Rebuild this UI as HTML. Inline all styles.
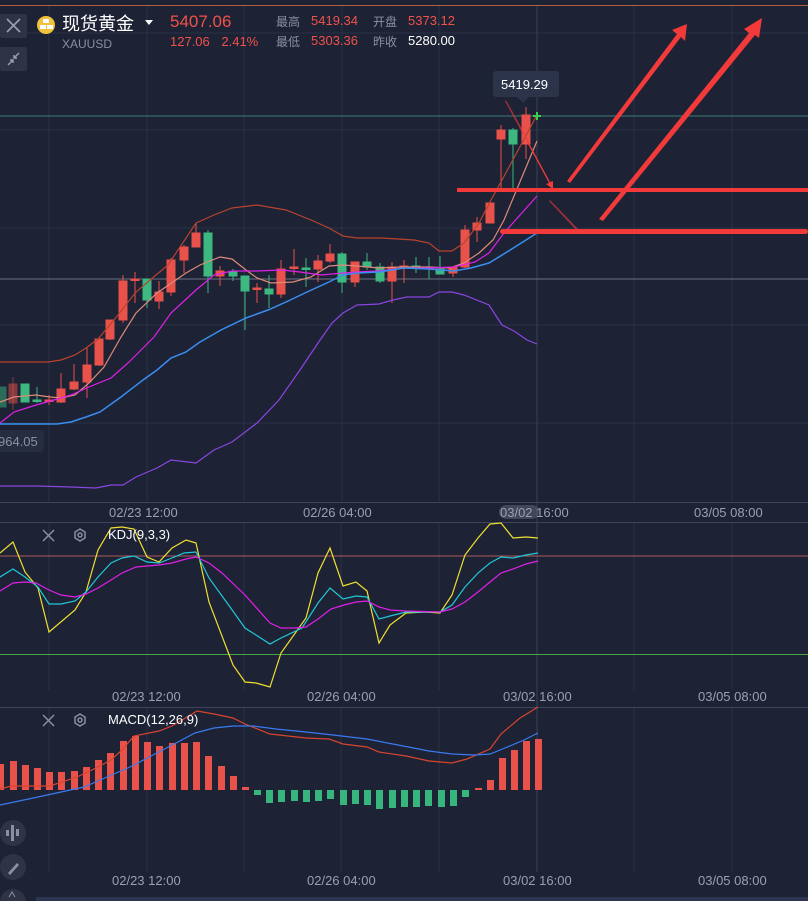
<!DOCTYPE html>
<html><head><meta charset="utf-8"><style>
html,body{margin:0;padding:0;background:#1d2235;width:808px;height:901px;overflow:hidden;font-family:"Liberation Sans","Noto Sans CJK SC",sans-serif}
svg{position:absolute;left:0;top:0}
.t{position:absolute;white-space:nowrap}
</style></head><body>
<svg width="808" height="901" viewBox="0 0 808 901">
<rect width="808" height="901" fill="#1d2235"/>
<line x1="0" y1="5.5" x2="808" y2="5.5" stroke="#b0603a" stroke-width="1"/>
<g stroke="#2c3347" stroke-width="1">
<line x1="49" y1="6" x2="49" y2="502"/><line x1="147" y1="6" x2="147" y2="502"/><line x1="244" y1="6" x2="244" y2="502"/><line x1="342" y1="6" x2="342" y2="502"/><line x1="439" y1="6" x2="439" y2="502"/><line x1="634" y1="6" x2="634" y2="502"/><line x1="732" y1="6" x2="732" y2="502"/>
<line x1="0" y1="33" x2="808" y2="33"/><line x1="0" y1="130" x2="808" y2="130"/><line x1="0" y1="228" x2="808" y2="228"/><line x1="0" y1="325" x2="808" y2="325"/><line x1="0" y1="423" x2="808" y2="423"/>
<line x1="49" y1="522" x2="49" y2="690"/><line x1="147" y1="522" x2="147" y2="690"/><line x1="244" y1="522" x2="244" y2="690"/><line x1="341" y1="522" x2="341" y2="690"/><line x1="439" y1="522" x2="439" y2="690"/><line x1="634" y1="522" x2="634" y2="690"/><line x1="732" y1="522" x2="732" y2="690"/>
<line x1="49" y1="708" x2="49" y2="872"/><line x1="147" y1="708" x2="147" y2="872"/><line x1="244" y1="708" x2="244" y2="872"/><line x1="341" y1="708" x2="341" y2="872"/><line x1="439" y1="708" x2="439" y2="872"/><line x1="634" y1="708" x2="634" y2="872"/><line x1="732" y1="708" x2="732" y2="872"/>
</g>
<line x1="537" y1="6" x2="537" y2="872" stroke="#3a4258"/>
<line x1="0" y1="279" x2="808" y2="279" stroke="#6a7084"/>
<line x1="0" y1="116" x2="808" y2="116" stroke="#3d7a72"/>
<line x1="0" y1="502.5" x2="808" y2="502.5" stroke="#3e455a"/>
<line x1="0" y1="522.5" x2="808" y2="522.5" stroke="#3e455a"/>
<line x1="0" y1="707.5" x2="808" y2="707.5" stroke="#3e455a"/>
<g stroke-width="1">
<g fill="#e8524a" stroke="#e8524a">
<line x1="13" y1="377" x2="13" y2="410" opacity=".5"/><rect x="9" y="384" width="8" height="19" opacity=".5"/>
<line x1="49" y1="395" x2="49" y2="405"/><rect x="45" y="400" width="8" height="1.5"/>
<line x1="61" y1="373" x2="61" y2="403"/><rect x="57" y="389" width="8" height="13"/>
<line x1="74" y1="364" x2="74" y2="390"/><rect x="70" y="382" width="8" height="7"/>
<line x1="87" y1="348" x2="87" y2="398"/><rect x="83" y="365" width="8" height="17"/>
<line x1="99" y1="339" x2="99" y2="366"/><rect x="95" y="339" width="8" height="26"/>
<line x1="110" y1="320" x2="110" y2="340"/><rect x="106" y="320" width="8" height="19"/>
<line x1="123" y1="275" x2="123" y2="323"/><rect x="119" y="281" width="8" height="39"/>
<line x1="135" y1="272" x2="135" y2="303"/><rect x="131" y="279" width="8" height="1.5"/>
<line x1="159" y1="281" x2="159" y2="309"/><rect x="155" y="292" width="8" height="9"/>
<line x1="171" y1="258" x2="171" y2="296"/><rect x="167" y="260" width="8" height="32"/>
<line x1="184" y1="245" x2="184" y2="273"/><rect x="180" y="247" width="8" height="13"/>
<line x1="196" y1="223" x2="196" y2="247"/><rect x="192" y="233" width="8" height="14"/>
<line x1="220" y1="266" x2="220" y2="286"/><rect x="216" y="271" width="8" height="5"/>
<line x1="257" y1="283" x2="257" y2="303"/><rect x="253" y="288" width="8" height="1.5"/>
<line x1="281" y1="260" x2="281" y2="298"/><rect x="277" y="269" width="8" height="25"/>
<line x1="294" y1="249" x2="294" y2="275"/><rect x="290" y="267" width="8" height="1.5"/>
<line x1="318" y1="255" x2="318" y2="282"/><rect x="314" y="261" width="8" height="8"/>
<line x1="330" y1="244" x2="330" y2="263"/><rect x="326" y="254" width="8" height="7"/>
<line x1="355" y1="262" x2="355" y2="287"/><rect x="351" y="262" width="8" height="20"/>
<line x1="392" y1="262" x2="392" y2="303"/><rect x="388" y="267" width="8" height="14"/>
<line x1="404" y1="260" x2="404" y2="283"/><rect x="400" y="266" width="8" height="1.5"/>
<line x1="453" y1="267" x2="453" y2="277"/><rect x="449" y="267" width="8" height="6"/>
<line x1="465" y1="225" x2="465" y2="268"/><rect x="461" y="230" width="8" height="37"/>
<line x1="477" y1="217" x2="477" y2="242"/><rect x="473" y="223" width="8" height="7"/>
<line x1="490" y1="201" x2="490" y2="223"/><rect x="486" y="203" width="8" height="20"/>
<line x1="501" y1="125" x2="501" y2="190"/><rect x="497" y="130" width="8" height="9"/>
<line x1="526" y1="107" x2="526" y2="159"/><rect x="522" y="115" width="8" height="29"/>
</g>
<g fill="#3cb880" stroke="#3cb880">
<rect x="-2" y="387" width="8" height="20" opacity=".5"/>
<rect x="21" y="384" width="8" height="18"/>
<line x1="37" y1="387" x2="37" y2="403"/><rect x="33" y="400" width="8" height="1.5"/>
<line x1="147" y1="279" x2="147" y2="308"/><rect x="143" y="279" width="8" height="21"/>
<line x1="208" y1="230" x2="208" y2="293"/><rect x="204" y="233" width="8" height="43"/>
<line x1="233" y1="269" x2="233" y2="281"/><rect x="229" y="272" width="8" height="4"/>
<line x1="245" y1="276" x2="245" y2="330"/><rect x="241" y="276" width="8" height="15"/>
<line x1="269" y1="275" x2="269" y2="308"/><rect x="265" y="289" width="8" height="5"/>
<line x1="306" y1="258" x2="306" y2="287"/><rect x="302" y="268" width="8" height="1.5"/>
<line x1="342" y1="252" x2="342" y2="293"/><rect x="338" y="254" width="8" height="28"/>
<line x1="367" y1="253" x2="367" y2="270"/><rect x="363" y="262" width="8" height="5"/>
<line x1="380" y1="263" x2="380" y2="283"/><rect x="376" y="267" width="8" height="14"/>
<line x1="416" y1="257" x2="416" y2="273"/><rect x="412" y="266" width="8" height="1.5"/>
<line x1="429" y1="257" x2="429" y2="279"/><rect x="425" y="267" width="8" height="1.5"/>
<line x1="440" y1="256" x2="440" y2="274"/><rect x="436" y="269" width="8" height="5"/>
<line x1="513" y1="128" x2="513" y2="190"/><rect x="509" y="130" width="8" height="14"/>
</g>
</g>
<g fill="none" stroke-width="1.2">
<polyline stroke="#b8432e" points="0,362 48,362 61,360 75,355 86,348 98,339 114,320 136,292 150,280 168,265 196,223 214,215 232,208 257,205 286,210 311,220 329,228 343,236 357,238 382,238 414,240 429,243 439,251 452,251 464,243 479,223 491,200 502,180 537,115"/>
<polyline stroke="#df8a78" points="0,402 14,397 36,395 50,397 61,398 75,395 89,383 104,367 121,337 136,313 157,293 186,273 200,265 220,257 232,259 246,270 257,278 271,283 293,282 311,277 329,266 343,265 357,266 379,268 400,267 429,267 450,268 464,263 479,253 493,240 504,220 537,141"/>
<polyline stroke="#e020e8" points="0,423 14,412 36,405 54,400 71,395 89,387 111,378 129,362 154,337 171,313 196,290 214,275 232,271 257,271 282,270 300,272 321,275 343,273 357,272 379,271 404,268 429,268 454,267 475,262 489,253 504,233 537,196"/>
<polyline stroke="#3a8ef0" stroke-width="1.5" points="0,424 57,424 71,422 86,417 100,412 121,397 143,380 157,370 171,358 186,352 200,342 221,330 246,318 268,310 286,302 307,292 329,282 343,275 357,273 379,272 404,268 429,269 454,271 471,268 489,263 507,252 537,233"/>
<polyline stroke="#8a46e0" points="0,486 36,486 71,487 96,488 111,485 123,485 136,477 157,468 171,460 196,463 214,450 232,442 257,423 279,400 300,370 318,343 332,323 343,313 357,305 379,304 393,300 407,297 429,297 439,292 452,292 464,295 489,305 502,325 514,331 527,340 537,344"/>
</g>
<path d="M537 112v8M533 116h8" stroke="#3ad04a" stroke-width="2"/>
<g fill="#f23a3a">
<rect x="457" y="188" width="351" height="4"/>
<rect x="500" y="229" width="308" height="5" rx="2.5"/>
<polygon points="599,219 749,33 744,29 762,18 759,38 755,35 603,221"/>
<polygon points="567,181 677,34 672,30 687,24 685,41 681,37 570,183"/>
<polygon points="529,143 550,182 553,181 553,189 546,184 549,183 528,144"/>
<polygon points="506,100 530,143 528,144 505,101" opacity=".6"/>
<polygon points="550,200 579,230 577,231 549,201" opacity=".6"/>
</g>
<rect x="493" y="71" width="66" height="26" rx="3" fill="#2b3449"/>
<polygon points="517,97 529,97 523,103" fill="#2b3449"/>
<rect x="-4" y="430" width="48" height="22" rx="3" fill="#262d41"/>
<line x1="0" y1="556" x2="808" y2="556" stroke="#b05a5a"/>
<line x1="0" y1="654.5" x2="808" y2="654.5" stroke="#45a845"/>
<g fill="none" stroke-width="1.2">
<polyline stroke="#f0e030" points="0,553 13,542 25,572 38,588 49,632 75,610 86,592 98,550 111,528 122,527 134,529 147,557 159,562 172,548 186,540 196,543 209,602 233,665 245,682 256,683 270,687 281,653 306,618 318,573 330,548 343,586 356,582 367,591 379,643 390,625 406,613 425,612 440,613 452,595 465,555 478,538 490,524 501,523 513,538 526,537 538,538"/>
<polyline stroke="#20c8d8" points="0,577 13,569 25,577 38,587 49,604 61,604 75,601 86,592 98,577 111,563 122,558 134,556 147,562 159,563 172,558 184,553 196,552 209,578 230,607 245,628 270,644 281,638 302,628 318,603 330,588 343,599 356,596 367,597 379,619 390,616 406,612 440,612 452,605 465,587 478,573 490,563 501,557 513,558 526,555 538,553"/>
<polyline stroke="#e020e8" points="0,591 13,583 25,582 36,583 49,590 61,595 75,597 86,594 98,588 111,580 122,573 136,567 147,566 159,565 172,563 186,559 196,557 209,563 222,573 245,595 270,623 281,628 295,628 306,627 318,619 331,609 344,605 356,602 367,601 379,607 390,610 406,611 440,612 452,609 465,602 478,592 490,582 501,573 513,569 526,564 538,561"/>
</g>
<g fill="#e8524a">
<rect x="-3" y="764" width="7" height="26"/><rect x="10" y="761" width="7" height="29"/><rect x="22" y="765" width="7" height="25"/><rect x="34" y="768" width="7" height="22"/><rect x="46" y="772" width="7" height="18"/><rect x="58" y="772" width="7" height="18"/><rect x="71" y="771" width="7" height="19"/><rect x="83" y="767" width="7" height="23"/><rect x="95" y="760" width="7" height="30"/><rect x="107" y="753" width="7" height="37"/><rect x="120" y="741" width="7" height="49"/><rect x="132" y="736" width="7" height="54"/><rect x="144" y="742" width="7" height="48"/><rect x="156" y="746" width="7" height="44"/><rect x="169" y="743" width="7" height="47"/><rect x="181" y="743" width="7" height="47"/><rect x="193" y="742" width="7" height="48"/><rect x="205" y="756" width="7" height="34"/><rect x="218" y="766" width="7" height="24"/><rect x="230" y="776" width="7" height="14"/><rect x="242" y="787" width="7" height="3"/>
<rect x="475" y="788" width="7" height="2"/><rect x="487" y="780" width="7" height="10"/><rect x="499" y="758" width="7" height="32"/><rect x="511" y="750" width="7" height="40"/><rect x="523" y="741" width="7" height="49"/><rect x="535" y="739" width="7" height="51"/>
</g>
<g fill="#36b67c">
<rect x="254" y="790" width="7" height="5"/><rect x="266" y="790" width="7" height="13"/><rect x="278" y="790" width="7" height="12"/><rect x="291" y="790" width="7" height="11"/><rect x="303" y="790" width="7" height="12"/><rect x="315" y="790" width="7" height="11"/><rect x="327" y="790" width="7" height="9"/><rect x="340" y="790" width="7" height="15"/><rect x="352" y="790" width="7" height="14"/><rect x="364" y="790" width="7" height="15"/><rect x="376" y="790" width="7" height="19"/><rect x="389" y="790" width="7" height="18"/><rect x="401" y="790" width="7" height="17"/><rect x="413" y="790" width="7" height="17"/><rect x="425" y="790" width="7" height="16"/><rect x="438" y="790" width="7" height="17"/><rect x="450" y="790" width="7" height="16"/><rect x="462" y="790" width="7" height="7"/>
</g>
<g fill="none" stroke-width="1.2">
<polyline stroke="#d8452e" points="0,789 11,786 50,786 77,777 96,768 111,760 122,750 134,736 159,731 172,726 197,711 214,714 233,718 245,724 270,734 306,738 329,739 343,744 367,747 379,752 406,756 429,761 452,763 467,759 490,749 501,734 520,718 538,707"/>
<polyline stroke="#3a7af0" points="0,805 38,797 84,787 107,777 130,767 153,755 176,743 195,733 214,728 233,726 253,726 276,729 306,732 333,735 367,739 398,745 429,751 452,754 475,755 490,754 505,748 524,740 538,733"/>
</g>
<g stroke="#8a90a0" stroke-width="1.5" fill="none">
<path d="M43 530l11 11M54 530l-11 11"/>
<path d="M43 715l11 11M54 715l-11 11"/>
<polygon points="80,529 85,532 85,538 80,541 75,538 75,532"/><circle cx="80" cy="535" r="2"/>
<polygon points="80,714 85,717 85,723 80,726 75,723 75,717"/><circle cx="80" cy="720" r="2"/>
</g>
<rect x="0" y="14" width="27" height="24" rx="2" fill="#2e3446"/>
<path d="M7 19l13 13M20 19l-13 13" stroke="#9aa0ae" stroke-width="1.6"/>
<rect x="0" y="47" width="27" height="24" rx="2" fill="#2e3446"/>
<path d="M8 65l5-5M19 53l-5 5M10 60h3v3M17 58h-3v-3" stroke="#9aa0ae" stroke-width="1.4" fill="none"/>
<circle cx="46" cy="25" r="9" fill="#f2c23c"/>
<rect x="43" y="19" width="6" height="4" fill="#fff"/><rect x="40" y="25" width="6" height="4" fill="#fff"/><rect x="47" y="25" width="6" height="4" fill="#fff"/>
<polygon points="145,20 153,20 149,25" fill="#fff"/>
<circle cx="13" cy="833" r="13" fill="#2e3446"/>
<g fill="#8a90a0"><rect x="6" y="830" width="3" height="6"/><rect x="11" y="825" width="3" height="16"/><rect x="16" y="829" width="3" height="7"/></g>
<circle cx="13" cy="867" r="13" fill="#2e3446"/>
<path d="M8 873l9-10 2 2-9 10z" fill="#8a90a0"/>
<circle cx="13" cy="902" r="13" fill="#2e3446"/>
<path d="M9 897l3-5 3 5" stroke="#8a90a0" fill="none"/>
<rect x="36" y="897" width="772" height="4" fill="#2d3550"/>
<rect x="499" y="505" width="40" height="14" rx="7" fill="#5a6070" opacity=".6"/>
</svg>
<div class="t" style="left:62px;top:12px;font-size:18px;color:#fff;font-family:'Noto Sans CJK SC',sans-serif;line-height:22px">现货黄金</div>
<div class="t" style="left:62px;top:37px;font-size:12px;color:#8a90a0">XAUUSD</div>
<div class="t" style="left:170px;top:12px;font-size:17px;color:#f0524a">5407.06</div>
<div class="t" style="left:170px;top:34px;font-size:13px;color:#f0524a;word-spacing:8px">127.06 2.41%</div>
<div class="t" style="left:276px;top:13px;font-size:12px;color:#8a90a0;font-family:'Noto Sans CJK SC',sans-serif">最高</div>
<div class="t" style="left:311px;top:13px;font-size:13px;color:#f0524a">5419.34</div>
<div class="t" style="left:373px;top:13px;font-size:12px;color:#8a90a0;font-family:'Noto Sans CJK SC',sans-serif">开盘</div>
<div class="t" style="left:408px;top:13px;font-size:13px;color:#f0524a">5373.12</div>
<div class="t" style="left:276px;top:33px;font-size:12px;color:#8a90a0;font-family:'Noto Sans CJK SC',sans-serif">最低</div>
<div class="t" style="left:311px;top:33px;font-size:13px;color:#f0524a">5303.36</div>
<div class="t" style="left:373px;top:33px;font-size:12px;color:#8a90a0;font-family:'Noto Sans CJK SC',sans-serif">昨收</div>
<div class="t" style="left:408px;top:33px;font-size:13px;color:#fff">5280.00</div>
<div class="t" style="left:501px;top:77px;font-size:13px;color:#fff">5419.29</div>
<div class="t" style="left:-2px;top:434px;font-size:13px;color:#8a90a0">964.05</div>
<div class="t" style="left:109px;top:505px;font-size:13px;color:#9aa0ae">02/23 12:00</div>
<div class="t" style="left:303px;top:505px;font-size:13px;color:#9aa0ae">02/26 04:00</div>
<div class="t" style="left:500px;top:505px;font-size:13px;color:#9aa0ae">03/02 16:00</div>
<div class="t" style="left:694px;top:505px;font-size:13px;color:#9aa0ae">03/05 08:00</div>
<div class="t" style="left:108px;top:527px;font-size:13px;color:#fff">KDJ(9,3,3)</div>
<div class="t" style="left:112px;top:689px;font-size:13px;color:#9aa0ae">02/23 12:00</div>
<div class="t" style="left:307px;top:689px;font-size:13px;color:#9aa0ae">02/26 04:00</div>
<div class="t" style="left:503px;top:689px;font-size:13px;color:#9aa0ae">03/02 16:00</div>
<div class="t" style="left:698px;top:689px;font-size:13px;color:#9aa0ae">03/05 08:00</div>
<div class="t" style="left:108px;top:712px;font-size:13px;color:#fff">MACD(12,26,9)</div>
<div class="t" style="left:112px;top:873px;font-size:13px;color:#9aa0ae">02/23 12:00</div>
<div class="t" style="left:307px;top:873px;font-size:13px;color:#9aa0ae">02/26 04:00</div>
<div class="t" style="left:503px;top:873px;font-size:13px;color:#9aa0ae">03/02 16:00</div>
<div class="t" style="left:698px;top:873px;font-size:13px;color:#9aa0ae">03/05 08:00</div>
</body></html>
